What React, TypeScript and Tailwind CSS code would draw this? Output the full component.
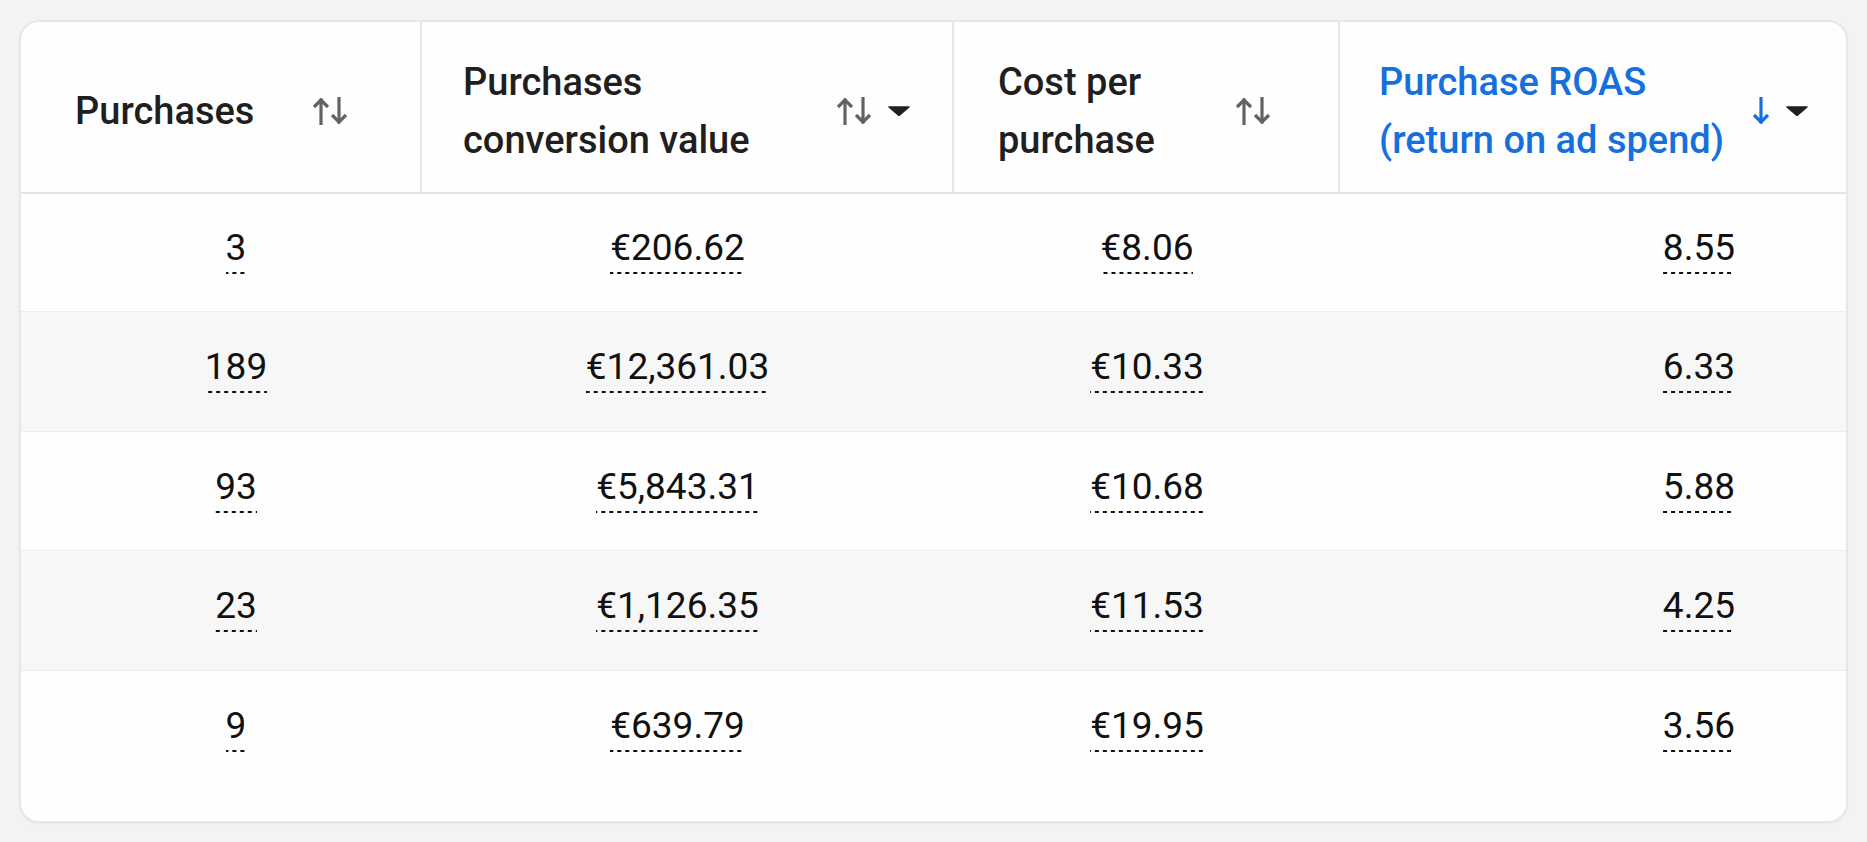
import React from "react";

type Row = { purchases: string; value: string; cost: string; roas: string };

const rows: Row[] = [
    { purchases: "3", value: "€206.62", cost: "€8.06", roas: "8.55" },
    { purchases: "189", value: "€12,361.03", cost: "€10.33", roas: "6.33" },
    { purchases: "93", value: "€5,843.31", cost: "€10.68", roas: "5.88" },
    { purchases: "23", value: "€1,126.35", cost: "€11.53", roas: "4.25" },
    { purchases: "9", value: "€639.79", cost: "€19.95", roas: "3.56" },
];

const rowHeights = ["h-[117px]", "h-[120px]", "h-[119px]", "h-[120px]", "h-[120px]"];

function SortIcon({ active = false }: { active?: boolean }) {
    const color = active ? "#1570dd" : "#5f6368";
    return (
        <svg width="38" height="28" viewBox="0 0 38 28" fill="none" stroke={color} strokeWidth="3.2" strokeLinecap="square">
            {!active && (
                <>
                    <path d="M10 27V3" />
                    <path d="M3 10l7-7 7 7" strokeLinecap="butt" />
                </>
            )}
            <path d="M28 1v24" />
            <path d="M21 18l7 7 7-7" strokeLinecap="butt" />
        </svg>
    );
}

function Caret() {
    return (
        <svg width="22" height="10" viewBox="0 0 22 10">
            <path d="M1 1h20l-10 8.5z" fill="#202124" stroke="#202124" strokeWidth="1.5" strokeLinejoin="round" />
        </svg>
    );
}

function Value({ children }: { children: React.ReactNode }) {
    return (
        <span className="inline-block leading-[40px] pb-[6px] -mt-[3px] bg-[linear-gradient(to_right,#111_55%,transparent_55%)] bg-[length:8px_2px] bg-bottom bg-repeat-x">
            {children}
        </span>
    );
}

export default function App() {
    return (
        <div className="min-h-screen w-full bg-[#f3f3f3] pt-[20px] pl-[19px]" style={{ fontFamily: "Roboto, 'Liberation Sans', sans-serif" }}>
            <div className="w-[1829px] h-[803px] bg-[#fefefe] border-2 border-[#e7e7e7] rounded-[20px] overflow-hidden shadow-[0_1px_3px_rgba(0,0,0,0.04)]">
                {/* header */}
                <div className="grid grid-cols-[401px_532px_386px_1fr] h-[172px] border-b-2 border-[#e3e3e3] text-[38px] leading-[58px] font-medium text-[#1f1f1f]">
                    <div className="flex items-center pt-2 pl-[54px] pr-[71px] border-r-2 border-[#e6e6e6]">
                        <span>Purchases</span>
                        <div className="ml-auto flex items-center"><SortIcon /></div>
                    </div>
                    <div className="flex items-center pt-2 pl-[41px] pr-[42px] border-r-2 border-[#e6e6e6]">
                        <span>Purchases<br />conversion value</span>
                        <div className="ml-auto flex items-center gap-[15px]"><SortIcon /><Caret /></div>
                    </div>
                    <div className="flex items-center pt-2 pl-[44px] pr-[66px] border-r-2 border-[#e6e6e6]">
                        <span>Cost per<br />purchase</span>
                        <div className="ml-auto flex items-center"><SortIcon /></div>
                    </div>
                    <div className="flex items-center pt-2 pl-[39px] pr-[38px] text-[#1570dd]">
                        <span>Purchase ROAS<br />(return on ad spend)</span>
                        <div className="ml-auto flex items-center gap-[15px]"><SortIcon active /><Caret /></div>
                    </div>
                </div>

                {/* body */}
                {rows.map((r, i) => (
                    <div
                        key={i}
                        className={`grid grid-cols-[401px_532px_386px_1fr] text-[37px] text-[#111] ${rowHeights[i]} ${i > 0 ? "border-t border-[#eeeeee]" : ""} ${i % 2 === 1 ? "bg-[#f7f7f8]" : ""}`}
                    >
                        <div className="flex items-center justify-center pl-[29px]"><Value>{r.purchases}</Value></div>
                        <div className="flex items-center justify-center pr-[21px]"><Value>{r.value}</Value></div>
                        <div className="flex items-center justify-center"><Value>{r.cost}</Value></div>
                        <div className="flex items-center justify-end pr-[111px]"><Value>{r.roas}</Value></div>
                    </div>
                ))}
            </div>
        </div>
    );
}
